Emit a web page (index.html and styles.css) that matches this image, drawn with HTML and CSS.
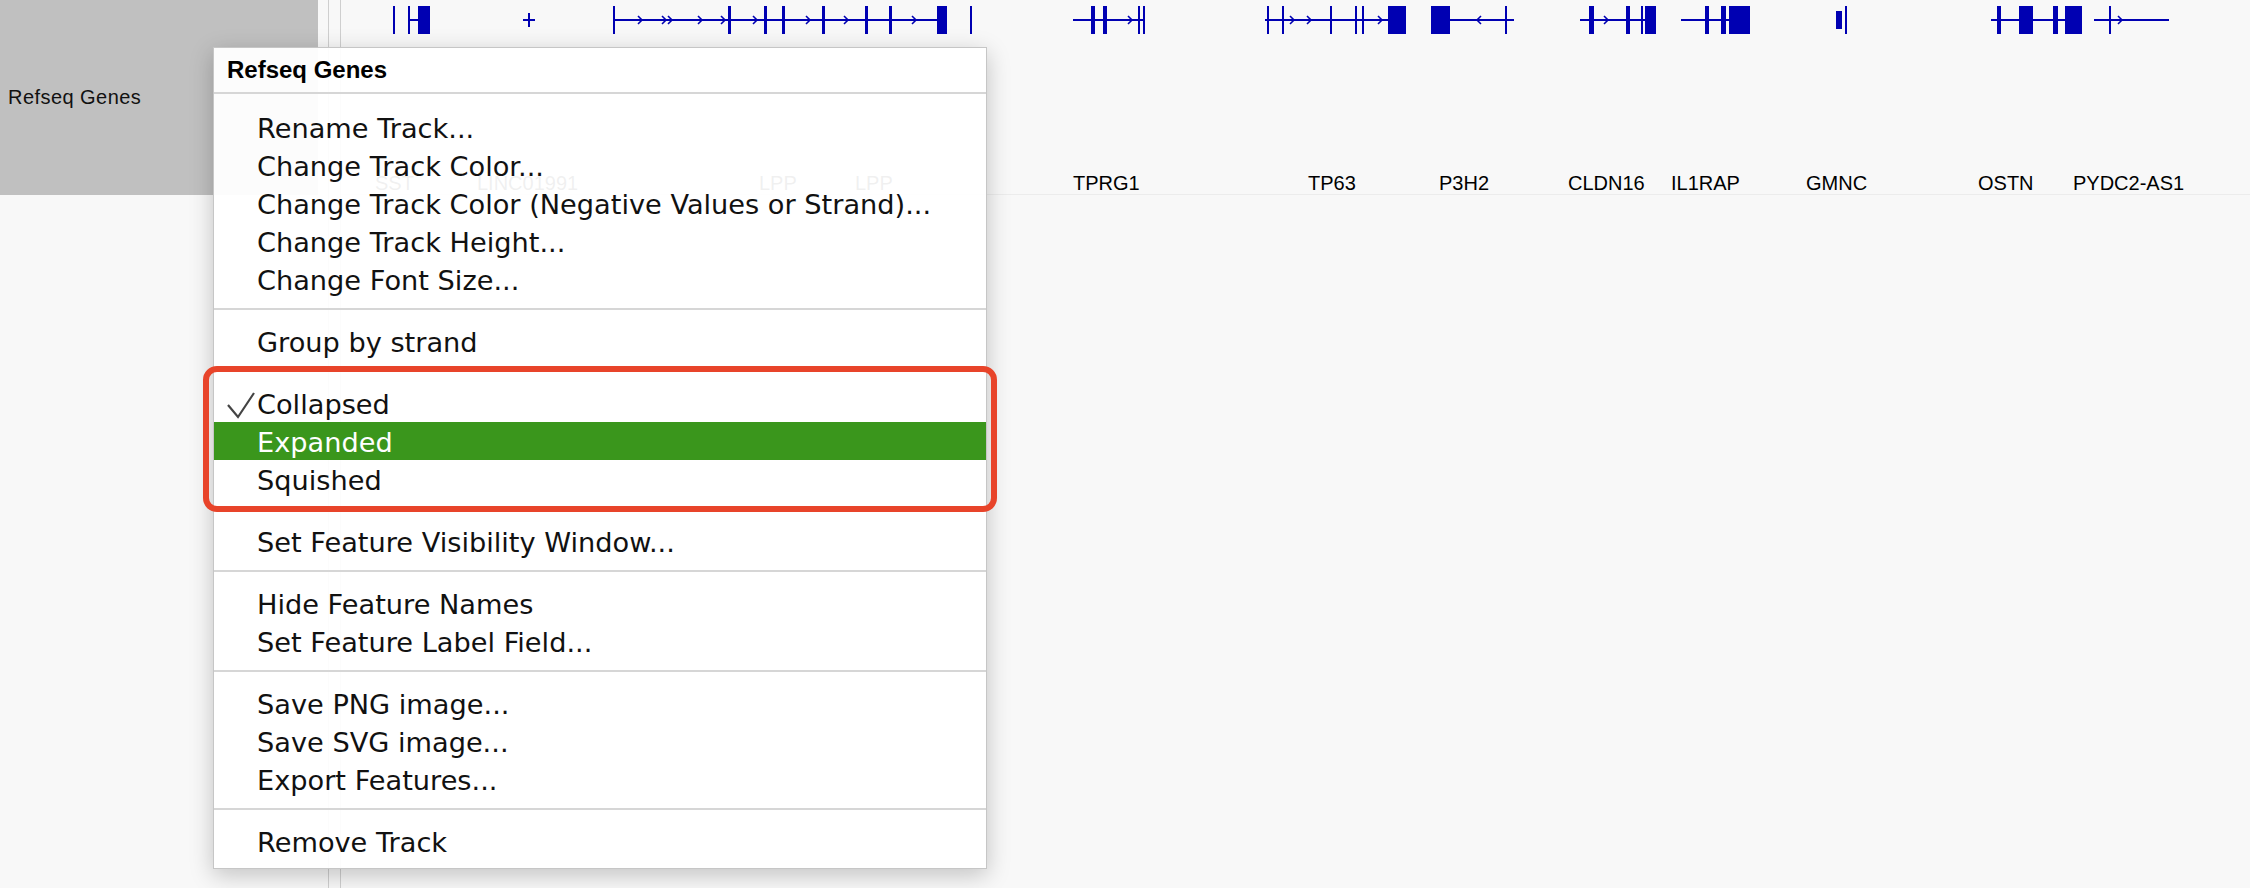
FILE: index.html
```html
<!DOCTYPE html>
<html>
<head>
<meta charset="utf-8">
<title>IGV track menu</title>
<link rel="stylesheet" href="styles.css">
</head>
<body>
<div class="app">
  <div class="name-col">
    <div class="track-name">Refseq Genes</div>
  </div>
  <div class="gap-col"></div>
  <div class="divider"></div>
  <div class="attr-col"></div>
  <div class="divider"></div>
  <div class="data-col">
    <div class="track-data">
      <svg class="genes" width="1909" height="194" viewBox="341 0 1909 194">
        <g class="feat">
          <!-- SST -->
          <rect x="393" y="6" width="2" height="28"/>
          <rect x="408" y="6" width="2" height="28"/>
          <rect x="408" y="19" width="10" height="2"/>
          <rect x="418" y="6" width="12" height="28"/>
          <!-- LINC01991 -->
          <rect x="528" y="13" width="2" height="14"/>
          <rect x="523" y="19" width="12" height="2"/>
          <!-- LPP -->
          <rect x="613" y="6" width="2" height="28"/>
          <rect x="613" y="19" width="331" height="2"/>
          <rect x="728" y="6" width="3" height="28"/>
          <rect x="764" y="6" width="3" height="28"/>
          <rect x="782" y="6" width="3" height="28"/>
          <rect x="822" y="6" width="3" height="28"/>
          <rect x="865" y="6" width="3" height="28"/>
          <rect x="889" y="6" width="3" height="28"/>
          <rect x="937" y="6" width="10" height="28"/>
          <rect x="970" y="6" width="2" height="28"/>
          <!-- TPRG1 -->
          <rect x="1073" y="19" width="72" height="2"/>
          <rect x="1091" y="6" width="4" height="28"/>
          <rect x="1103" y="6" width="4" height="28"/>
          <rect x="1138" y="6" width="2" height="28"/>
          <rect x="1143" y="6" width="2" height="28"/>
          <!-- TP63 -->
          <rect x="1265" y="19" width="141" height="2"/>
          <rect x="1267" y="6" width="2" height="28"/>
          <rect x="1282" y="6" width="2" height="28"/>
          <rect x="1330" y="6" width="2" height="28"/>
          <rect x="1355" y="6" width="2" height="28"/>
          <rect x="1362" y="6" width="2" height="28"/>
          <rect x="1388" y="6" width="18" height="28"/>
          <!-- P3H2 -->
          <rect x="1431" y="6" width="19" height="28"/>
          <rect x="1450" y="19" width="64" height="2"/>
          <rect x="1505" y="6" width="2" height="28"/>
          <!-- CLDN16 -->
          <rect x="1580" y="19" width="76" height="2"/>
          <rect x="1589" y="6" width="5" height="28"/>
          <rect x="1626" y="6" width="4" height="28"/>
          <rect x="1641" y="6" width="2" height="28"/>
          <rect x="1645" y="6" width="11" height="28"/>
          <!-- IL1RAP -->
          <rect x="1681" y="19" width="69" height="2"/>
          <rect x="1705" y="6" width="4" height="28"/>
          <rect x="1721" y="6" width="5" height="28"/>
          <rect x="1729" y="6" width="21" height="28"/>
          <!-- GMNC -->
          <rect x="1836" y="11" width="6" height="18"/>
          <rect x="1845" y="6" width="2" height="28"/>
          <!-- OSTN -->
          <rect x="1991" y="19" width="91" height="2"/>
          <rect x="1997" y="6" width="4" height="28"/>
          <rect x="2019" y="6" width="2" height="28"/>
          <rect x="2021" y="6" width="12" height="28"/>
          <rect x="2053" y="6" width="5" height="28"/>
          <rect x="2065" y="6" width="17" height="28"/>
          <!-- PYDC2-AS1 -->
          <rect x="2094" y="19" width="75" height="2"/>
          <rect x="2109" y="6" width="2" height="28"/>
        </g>
        <g class="arrows">
          <polyline points="638,16 642,20 638,24"/>
          <polyline points="662,16 666,20 662,24"/>
          <polyline points="668,16 672,20 668,24"/>
          <polyline points="698,16 702,20 698,24"/>
          <polyline points="721,16 725,20 721,24"/>
          <polyline points="753,16 757,20 753,24"/>
          <polyline points="806,16 810,20 806,24"/>
          <polyline points="844,16 848,20 844,24"/>
          <polyline points="912,16 916,20 912,24"/>
          <polyline points="1128,16 1132,20 1128,24"/>
          <polyline points="1290,16 1294,20 1290,24"/>
          <polyline points="1307,16 1311,20 1307,24"/>
          <polyline points="1378,16 1382,20 1378,24"/>
          <polyline points="1481,16 1477,20 1481,24"/>
          <polyline points="1604,16 1608,20 1604,24"/>
          <polyline points="2118,16 2122,20 2118,24"/>
        </g>
        <g class="labels">
          <text class="ghost" x="375" y="190">SST</text>
          <text class="ghost" x="477" y="190">LINC01991</text>
          <text class="ghost" x="759" y="190">LPP</text>
          <text class="ghost" x="855" y="190">LPP</text>
          <text x="1073" y="190">TPRG1</text>
          <text x="1308" y="190">TP63</text>
          <text x="1439" y="190">P3H2</text>
          <text x="1568" y="190">CLDN16</text>
          <text x="1671" y="190">IL1RAP</text>
          <text x="1806" y="190">GMNC</text>
          <text x="1978" y="190">OSTN</text>
          <text x="2073" y="190">PYDC2-AS1</text>
        </g>
      </svg>
    </div>
  </div>
</div>

<div class="menu">
  <div class="menu-title">Refseq Genes</div>
  <div class="menu-sep first"></div>
  <div class="menu-item"><span class="gutter"></span><span>Rename Track...</span></div>
  <div class="menu-item"><span class="gutter"></span><span>Change Track Color...</span></div>
  <div class="menu-item"><span class="gutter"></span><span>Change Track Color (Negative Values or Strand)...</span></div>
  <div class="menu-item"><span class="gutter"></span><span>Change Track Height...</span></div>
  <div class="menu-item"><span class="gutter"></span><span>Change Font Size...</span></div>
  <div class="menu-sep"></div>
  <div class="menu-item"><span class="gutter"></span><span>Group by strand</span></div>
  <div class="menu-sep"></div>
  <div class="menu-item"><span class="gutter"><svg class="check" width="43" height="38" viewBox="0 0 43 38"><polyline points="14,21 24,33 40,9"/></svg></span><span>Collapsed</span></div>
  <div class="menu-item active"><span class="gutter"></span><span>Expanded</span></div>
  <div class="menu-item"><span class="gutter"></span><span>Squished</span></div>
  <div class="menu-sep"></div>
  <div class="menu-item"><span class="gutter"></span><span>Set Feature Visibility Window...</span></div>
  <div class="menu-sep"></div>
  <div class="menu-item"><span class="gutter"></span><span>Hide Feature Names</span></div>
  <div class="menu-item"><span class="gutter"></span><span>Set Feature Label Field...</span></div>
  <div class="menu-sep"></div>
  <div class="menu-item"><span class="gutter"></span><span>Save PNG image...</span></div>
  <div class="menu-item"><span class="gutter"></span><span>Save SVG image...</span></div>
  <div class="menu-item"><span class="gutter"></span><span>Export Features...</span></div>
  <div class="menu-sep"></div>
  <div class="menu-item"><span class="gutter"></span><span>Remove Track</span></div>
</div>

<div class="annot"></div>
</body>
</html>
```

FILE: styles.css
```css
html, body {
  margin: 0;
  padding: 0;
}

body {
  width: 2250px;
  height: 888px;
  overflow: hidden;
  position: relative;
  background: #f8f8f8;
  font-family: "Liberation Sans", Arial, sans-serif;
  color: #000;
}

.app {
  display: flex;
  height: 888px;
}

.name-col {
  width: 318px;
  flex: none;
}

.track-name {
  height: 195px;
  box-sizing: border-box;
  background: #c0c0c0;
  padding: 86px 0 0 8px;
  font-size: 20px;
  line-height: 23px;
  letter-spacing: 0.45px;
  color: #111;
}

.gap-col {
  width: 10px;
  flex: none;
}

.divider {
  width: 1px;
  flex: none;
  background: #cfcfcf;
}

.attr-col {
  width: 11px;
  flex: none;
}

.data-col {
  flex: 1;
  min-width: 0;
}

.track-data {
  height: 195px;
  border-bottom: 1px solid #ececec;
  box-sizing: border-box;
}

.genes {
  display: block;
}

.feat rect {
  fill: #0000b2;
}

.arrows polyline {
  fill: none;
  stroke: #0000b2;
  stroke-width: 1.6;
}

.labels text {
  font-family: "Liberation Sans", Arial, sans-serif;
  font-size: 20px;
  fill: #000;
}

/* popup menu */
.menu {
  position: absolute;
  left: 213px;
  top: 47px;
  width: 772px;
  border: 1px solid #c6c6c6;
  background: rgba(255, 255, 255, 0.94);
  box-shadow: 0 6px 22px rgba(0, 0, 0, 0.22);
  padding-bottom: 8px;
  font-family: "DejaVu Sans", "Liberation Sans", sans-serif;
  font-size: 27.2px;
  color: #111;
}

.menu-title {
  height: 44px;
  line-height: 44px;
  padding-left: 13px;
  font-family: "Liberation Sans", Arial, sans-serif;
  font-weight: bold;
  font-size: 24px;
  color: #000;
}

.menu-sep {
  height: 2px;
  background: #d6d6d6;
  margin: 10px 0 12px;
}

.menu-sep.first {
  margin: 0 0 14px;
}

.menu-item {
  display: flex;
  height: 38px;
  box-sizing: border-box;
  padding-top: 3px;
  line-height: 35px;
  white-space: nowrap;
}

.menu-item.active {
  background: #3a961c;
  color: #fff;
}

.gutter {
  width: 43px;
  flex: none;
}

.check {
  display: block;
  margin-top: -3px;
}

.check polyline {
  fill: none;
  stroke: #444;
  stroke-width: 2.2;
  stroke-linejoin: miter;
}

/* annotation highlight */
.annot {
  position: absolute;
  left: 203px;
  top: 366px;
  width: 794px;
  height: 146px;
  box-sizing: border-box;
  border: 6px solid #e8442a;
  border-radius: 14px;
}
```
